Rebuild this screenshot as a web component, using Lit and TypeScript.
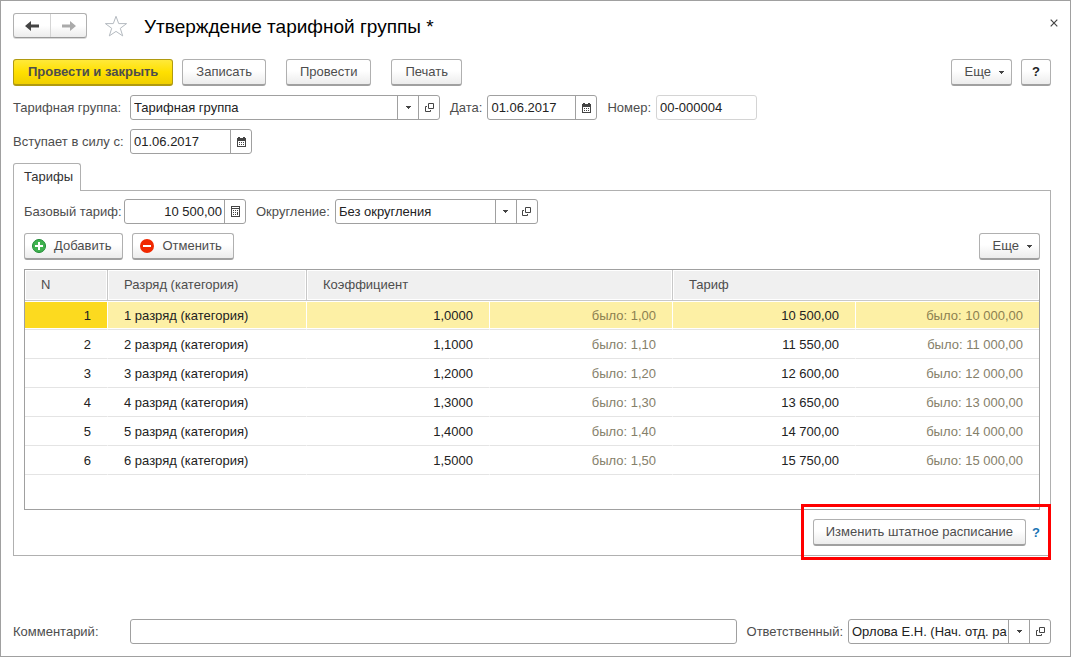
import { LitElement, html, css, svg, nothing } from "lit";
import { customElement, state } from "lit/decorators.js";

interface Row {
  n: number;
  name: string;
  ratio: string;
  oldRatio: string;
  rate: string;
  oldRate: string;
}

const ROWS: Row[] = [
  { n: 1, name: "1 разряд (категория)", ratio: "1,0000", oldRatio: "1,00", rate: "10 500,00", oldRate: "10 000,00" },
  { n: 2, name: "2 разряд (категория)", ratio: "1,1000", oldRatio: "1,10", rate: "11 550,00", oldRate: "11 000,00" },
  { n: 3, name: "3 разряд (категория)", ratio: "1,2000", oldRatio: "1,20", rate: "12 600,00", oldRate: "12 000,00" },
  { n: 4, name: "4 разряд (категория)", ratio: "1,3000", oldRatio: "1,30", rate: "13 650,00", oldRate: "13 000,00" },
  { n: 5, name: "5 разряд (категория)", ratio: "1,4000", oldRatio: "1,40", rate: "14 700,00", oldRate: "14 000,00" },
  { n: 6, name: "6 разряд (категория)", ratio: "1,5000", oldRatio: "1,50", rate: "15 750,00", oldRate: "15 000,00" },
];

const icon = (w: number, h: number, body: unknown) =>
  html`<svg width=${w} height=${h} viewBox="0 0 ${w} ${h}" aria-hidden="true">${body}</svg>`;

const caret = icon(5, 3, svg`<path d="M0 0h5v1H0zM1 1h3v1H1zM2 2h1v1H2z" fill="#444"/>`);

const openIcon = icon(9, 9, svg`
  <path d="M3.5.5h5v5h-5z" fill="none" stroke="#444"/>
  <path d="M2 3.500H.5v5h5V7" fill="none" stroke="#444"/>`);

const calendarIcon = icon(9, 10, svg`
  <path d="M1 0h2v1h3V0h2v1h1v9H0V1h1z" fill="#444"/>
  <path d="M1 4h7v5H1z" fill="#fff"/>
  <path d="M2 5h1v1H2zM4 5h1v1H4zM6 5h1v1H6zM2 7h1v1H2zM4 7h1v1H4zM6 7h1v1H6z" fill="#444"/>`);

const calculatorIcon = icon(9, 11, svg`
  <path d="M0 0h9v11H0z" fill="#444"/>
  <path d="M1 1h7v1H1zM1 3h7v7H1z" fill="#fff"/>
  <path d="M2 4h1v1H2zM4 4h1v1H4zM6 4h1v1H6zM2 6h1v1H2zM4 6h1v1H4zM6 6h1v3H6zM2 8h1v1H2zM4 8h1v1H4z" fill="#444"/>`);

const backIcon = icon(14, 10, svg`<path d="M0 5 6 0V3.500H14v3H6V10z" fill="#444"/>`);
const forwardIcon = icon(14, 10, svg`<path d="M14 5 8 0V3.500H0v3h8V10z" fill="#aaa"/>`);

const starIcon = icon(24, 22, svg`
  <path d="M12 1.300 14.700 8.600H22.600L16.300 13.300 18.700 20.900 12 16.400 5.300 20.900 7.700 13.300 1.400 8.600H9.300z"
    fill="#fff" stroke="#b4bac0" stroke-width="1"/>`);

const closeIcon = icon(8, 8, svg`<path d="M.7.7l6.600 6.600M7.300.7.7 7.300" stroke="#444" stroke-width="1.200"/>`);

const addIcon = icon(14, 14, svg`
  <circle cx="7" cy="7" r="6.500" fill="#3fb24f" stroke="#1f8a35"/>
  <path d="M7 3v8M3 7h8" stroke="#fff" stroke-width="2"/>`);

const cancelIcon = icon(14, 14, svg`
  <circle cx="7" cy="7" r="7" fill="#f02800"/>
  <path d="M3 7h8" stroke="#fff" stroke-width="2"/>`);

@customElement("app-root")
export class AppRoot extends LitElement {
  @state() private current = 1;

  static styles = css`
    :host {
      display: block;
      font: 13px/16px "Liberation Sans", Arial, sans-serif;
      color: #4d4d4d;
    }
    * { box-sizing: border-box; }
    svg { display: block; flex: none; }
    button, input, select { font: inherit; color: inherit; margin: 0; }
    button { cursor: pointer; }

    .window {
      display: flex;
      flex-direction: column;
      min-height: 100vh;
      padding: 12px 19px 12px 12px;
      border: 1px solid #a0a0a0;
      background: #fff;
    }

    .titlebar { display: flex; align-items: flex-start; height: 26px; }
    .nav {
      display: flex;
      height: 25px;
      border: 1px solid #b0b0b0;
      border-bottom-color: #999;
      border-radius: 3px;
      background: linear-gradient(#fff 50%, #ececec);
      box-shadow: 0 1px 0 #d8d8d8;
    }
    .nav button {
      display: grid;
      place-items: center;
      width: 36px;
      padding: 0;
      border: 0;
      background: none;
    }
    .nav button + button { border-left: 1px solid #d4d4d4; }
    .star { padding: 0; border: 0; background: none; margin: 2px 16px 0 17px; }
    h1 { flex: 1; margin: 0; font-size: 19px; line-height: 28px; font-weight: 400; color: #000; }
    .close { padding: 0; border: 0; background: none; margin: 6px -7px 0 0; }

    .btn {
      display: flex;
      align-items: center;
      justify-content: center;
      height: 27px;
      padding: 0 13px;
      border: 1px solid #b0b0b0;
      border-bottom: 2px solid #a0a0a0;
      border-radius: 3px;
      background: linear-gradient(#fff 45%, #ececec);
      white-space: nowrap;
    }
    .primary {
      padding: 0 14px;
      border-color: #b09a10;
      background: linear-gradient(#ffe93a, #ffe000 50%, #f0cf00);
      font-weight: 700;
    }
    .more { gap: 8px; padding: 0 7px 0 13px; }
    .with-icon { gap: 8px; padding: 0 11px 0 7px; }
    .wide { padding: 0 12px; }
    .help { width: 30px; padding: 0; font-weight: 700; color: #222; }

    .commands { display: flex; gap: 9px; margin-top: 20px; }
    .apart { margin-left: 11px; }
    .end { margin-left: auto; }

    .line { display: flex; align-items: center; gap: 10px; margin-top: 9px; }
    .pair { display: flex; align-items: center; gap: 5px; }
    .pair > label { white-space: nowrap; }
    .lead > label { width: 112px; }
    .short > label { width: 95px; }

    .field {
      display: flex;
      height: 25px;
      border: 1px solid #a0a0a0;
      border-radius: 3px;
      background: #fff;
      color: #222;
      overflow: hidden;
    }
    .field input, .field select {
      flex: 1;
      min-width: 0;
      width: 100%;
      height: 23px;
      padding: 0 3px;
      border: 0;
      outline: 0;
      background: none;
    }
    .field button {
      display: grid;
      place-items: center;
      flex: none;
      width: 21px;
      padding: 0;
      border: 0;
      border-left: 1px solid #a0a0a0;
      background: none;
    }
    .combo { display: grid; grid-template-columns: minmax(0, 1fr) 21px; flex: 1; min-width: 0; }
    .combo select {
      appearance: none;
      grid-area: 1 / 1 / 2 / 3;
      padding: 0 22px 0 3px;
    }
    .combo span {
      grid-area: 1 / 2;
      display: grid;
      place-items: center;
      border-left: 1px solid #a0a0a0;
      pointer-events: none;
    }
    .group { width: 310px; }
    .date { width: 110px; }
    .since { width: 122px; }
    .number { width: 101px; border-color: #d4d4d4; }
    .base { width: 122px; }
    .base input { text-align: right; padding-right: 2px; }
    .rounding { width: 203px; }
    .person { width: 203px; }

    .tabs { display: flex; margin-top: 9px; }
    .tab {
      height: 28px;
      margin-bottom: -1px;
      padding: 0 7px 2px 10px;
      border: 1px solid #b0b0b0;
      border-bottom: 0;
      border-radius: 3px 3px 0 0;
      background: #fff;
      color: #333;
      position: relative;
    }
    .panel {
      display: flex;
      flex-direction: column;
      padding: 8px 10px 9px;
      border: 1px solid #b0b0b0;
    }
    .panel .line { margin-top: 0; }
    .tools { display: flex; gap: 9px; margin: 9px 0; }

    .grid { min-height: 241px; border: 1px solid #a0a0a0; }
    table { width: 100%; table-layout: fixed; border-collapse: separate; border-spacing: 0; }
    .col-n { width: 83px; }
    .col-name { width: 199px; }
    th {
      height: 31px;
      padding: 0 16px;
      border-right: 1px solid #c8c8c8;
      border-bottom: 1px solid #c8c8c8;
      background: #f0f0f0;
      box-shadow: inset 0 0 0 1px #fff;
      font-weight: 400;
      text-align: left;
    }
    td {
      height: 29px;
      padding: 1px 16px 0;
      border-right: 1px solid transparent;
      border-bottom: 1px solid #e4e4e4;
      color: #222;
      text-align: right;
      white-space: nowrap;
    }
    td.name { text-align: left; }
    td.old { color: #85806a; }
    th:last-child, td:last-child { border-right: 0; }
    .current td {
      border-right-color: #fff;
      background: #fdf0a5;
      box-shadow: inset 0 1px 0 #fff, inset 0 -1px 0 #fff;
    }
    .current td.n { background: #fcda1f; }
    .current td.old { color: #8c8050; }

    .after {
      position: relative;
      display: flex;
      align-items: center;
      align-self: flex-end;
      gap: 6px;
      margin-top: 9px;
    }
    .after::after {
      content: "";
      position: absolute;
      inset: -15px -11px -14px -12px;
      border: 3px solid #ff0000;
      pointer-events: none;
    }
    .hint { color: #1a74b4; font-weight: 700; text-decoration: none; }

    .footer { display: flex; align-items: center; gap: 10px; margin-top: auto; padding-top: 20px; }
    .grow { flex: 1; }
    .grow .field { flex: 1; }
  `;

  private combo(id: string, cls: string, value: string) {
    return html`<div class="field ${cls}">
      <div class="combo">
        <select id=${id}><option>${value}</option></select>
        <span>${caret}</span>
      </div>
      <button aria-label="Открыть">${openIcon}</button>
    </div>`;
  }

  private input(id: string, cls: string, value: string, glyph?: unknown, hint = "") {
    return html`<div class="field ${cls}">
      <input id=${id} type="text" .value=${value} />
      ${glyph ? html`<button aria-label=${hint}>${glyph}</button>` : nothing}
    </div>`;
  }

  render() {
    return html`
      <main class="window">
        <header class="titlebar">
          <div class="nav">
            <button aria-label="Назад">${backIcon}</button>
            <button aria-label="Вперед">${forwardIcon}</button>
          </div>
          <button class="star" aria-label="Избранное">${starIcon}</button>
          <h1>Утверждение тарифной группы *</h1>
          <button class="close" aria-label="Закрыть">${closeIcon}</button>
        </header>

        <div class="commands">
          <button class="btn primary">Провести и закрыть</button>
          <button class="btn">Записать</button>
          <button class="btn apart">Провести</button>
          <button class="btn apart">Печать</button>
          <button class="btn more end">Еще ${caret}</button>
          <button class="btn help">?</button>
        </div>

        <div class="line">
          <div class="pair lead">
            <label for="group">Тарифная группа:</label>
            ${this.combo("group", "group", "Тарифная группа")}
          </div>
          <div class="pair">
            <label for="date">Дата:</label>
            ${this.input("date", "date", "01.06.2017", calendarIcon, "Выбрать дату")}
          </div>
          <div class="pair">
            <label for="number">Номер:</label>
            ${this.input("number", "number", "00-000004")}
          </div>
        </div>
        <div class="line">
          <div class="pair lead">
            <label for="since">Вступает в силу с:</label>
            ${this.input("since", "since", "01.06.2017", calendarIcon, "Выбрать дату")}
          </div>
        </div>

        <div class="tabs" role="tablist">
          <button class="tab" role="tab" aria-selected="true">Тарифы</button>
        </div>
        <section class="panel" role="tabpanel">
          <div class="line">
            <div class="pair short">
              <label for="base">Базовый тариф:</label>
              ${this.input("base", "base", "10 500,00", calculatorIcon, "Калькулятор")}
            </div>
            <div class="pair">
              <label for="rounding">Округление:</label>
              ${this.combo("rounding", "rounding", "Без округления")}
            </div>
          </div>
          <div class="tools">
            <button class="btn with-icon">${addIcon}Добавить</button>
            <button class="btn with-icon">${cancelIcon}Отменить</button>
            <button class="btn more end">Еще ${caret}</button>
          </div>
          <div class="grid">
            <table>
              <colgroup>
                <col class="col-n" /><col class="col-name" /><col /><col /><col /><col />
              </colgroup>
              <thead>
                <tr>
                  <th>N</th>
                  <th>Разряд (категория)</th>
                  <th colspan="2">Коэффициент</th>
                  <th colspan="2">Тариф</th>
                </tr>
              </thead>
              <tbody>
                ${ROWS.map(
                  (r) => html`<tr
                    class=${r.n === this.current ? "current" : ""}
                    @click=${() => (this.current = r.n)}
                  >
                    <td class="n">${r.n}</td>
                    <td class="name">${r.name}</td>
                    <td>${r.ratio}</td>
                    <td class="old">было: ${r.oldRatio}</td>
                    <td>${r.rate}</td>
                    <td class="old">было: ${r.oldRate}</td>
                  </tr>`
                )}
              </tbody>
            </table>
          </div>
          <div class="after">
            <button class="btn wide">Изменить штатное расписание</button>
            <a class="hint" href="#help">?</a>
          </div>
        </section>

        <footer class="footer">
          <div class="pair lead grow">
            <label for="comment">Комментарий:</label>
            ${this.input("comment", "", "")}
          </div>
          <div class="pair">
            <label for="person">Ответственный:</label>
            ${this.combo("person", "person", "Орлова Е.Н. (Нач. отд. расчетов)")}
          </div>
        </footer>
      </main>
    `;
  }
}
